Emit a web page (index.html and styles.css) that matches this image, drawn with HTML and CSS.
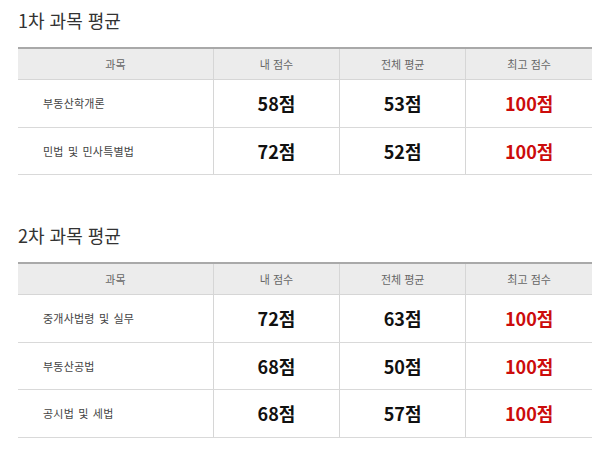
FILE: index.html
```html
<!DOCTYPE html>
<html lang="ko">
<head>
<meta charset="utf-8">
<link rel="stylesheet" href="styles.css">
</head>
<body>
<div class="page">
  <section class="block">
    <h2 class="title">1차 과목 평균</h2>
    <table class="scores">
      <colgroup><col class="c-subj"><col class="c-num"><col class="c-num"><col class="c-num"></colgroup>
      <thead>
        <tr><th>과목</th><th>내 점수</th><th>전체 평균</th><th>최고 점수</th></tr>
      </thead>
      <tbody>
        <tr><td class="subj">부동산학개론</td><td class="num">58점</td><td class="num">53점</td><td class="num top">100점</td></tr>
        <tr><td class="subj">민법 및 민사특별법</td><td class="num">72점</td><td class="num">52점</td><td class="num top">100점</td></tr>
      </tbody>
    </table>
  </section>
  <section class="block">
    <h2 class="title">2차 과목 평균</h2>
    <table class="scores">
      <colgroup><col class="c-subj"><col class="c-num"><col class="c-num"><col class="c-num"></colgroup>
      <thead>
        <tr><th>과목</th><th>내 점수</th><th>전체 평균</th><th>최고 점수</th></tr>
      </thead>
      <tbody>
        <tr><td class="subj">중개사법령 및 실무</td><td class="num">72점</td><td class="num">63점</td><td class="num top">100점</td></tr>
        <tr><td class="subj">부동산공법</td><td class="num">68점</td><td class="num">50점</td><td class="num top">100점</td></tr>
        <tr><td class="subj">공시법 및 세법</td><td class="num">68점</td><td class="num">57점</td><td class="num top">100점</td></tr>
      </tbody>
    </table>
  </section>
</div>
</body>
</html>
```
FILE: styles.css
```css
html, body {
  margin: 0;
  padding: 0;
  background: #fff;
}
body {
  font-family: "Noto Sans CJK KR", "Noto Sans", sans-serif;
  color: #333;
}
.page {
  padding: 8px 8px 0 18px;
  display: flex;
  flex-direction: column;
  gap: 48px;
}
.title {
  margin: 0 0 15px;
  font-size: 18px;
  line-height: 24px;
  font-weight: normal;
  color: #333;
}
.scores {
  width: 574px;
  border-collapse: collapse;
  table-layout: fixed;
  border-top: 2px solid #a9a9a9;
}
.c-subj { width: 195px; }
.c-num { width: 126px; }
.scores th {
  height: 30px;
  padding: 0;
  background: #ececec;
  font-size: 11px;
  font-weight: normal;
  color: #666;
  border-bottom: 1px solid #d6d6d6;
  border-left: 1px solid #d6d6d6;
}
.scores th:first-child,
.scores td:first-child { border-left: none; }
.scores td {
  height: 46.5px;
  padding: 0;
  border-bottom: 1px solid #d9d9d9;
  border-left: 1px solid #d6d6d6;
}
.subj {
  padding-left: 25px !important;
  font-size: 11px;
  letter-spacing: 0.2px;
  word-spacing: 1px;
  color: #444;
}
.num {
  text-align: center;
  font-size: 18px;
  font-weight: bold;
  color: #111;
}
.num.top { color: #cc0c0c; }
```
